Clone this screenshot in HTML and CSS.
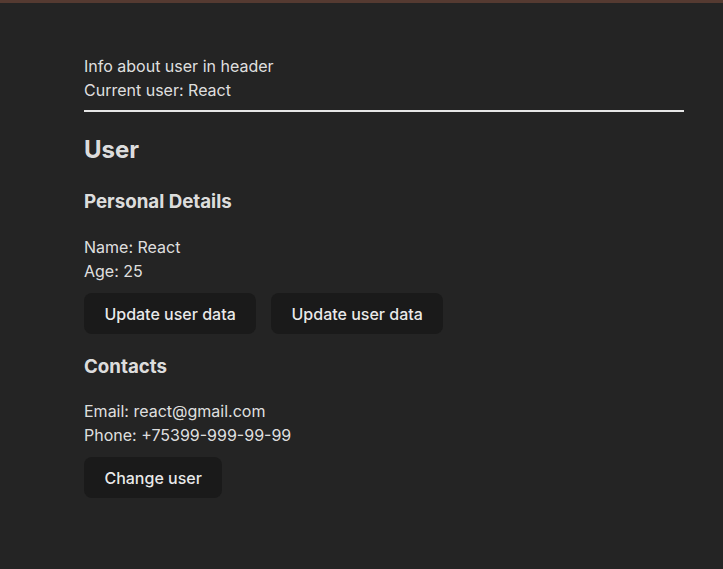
FILE: index.html
```html
<!DOCTYPE html>
<html lang="en">
<head>
<meta charset="utf-8">
<title>User</title>
<link rel="stylesheet" href="styles.css">
</head>
<body>
<div class="topbar"></div>
<main class="app">
  <header class="header">
    <p class="line">Info about user in header</p>
    <p class="line">Current user: React</p>
  </header>
  <h2 class="title">User</h2>
  <section class="section">
    <h3 class="subtitle">Personal Details</h3>
    <p class="line">Name: React</p>
    <p class="line">Age: 25</p>
    <div class="actions">
      <button class="btn">Update user data</button>
      <button class="btn">Update user data</button>
    </div>
  </section>
  <section class="section">
    <h3 class="subtitle">Contacts</h3>
    <p class="line">Email: react@gmail.com</p>
    <p class="line">Phone: +75399-999-99-99</p>
    <div class="actions">
      <button class="btn">Change user</button>
    </div>
  </section>
</main>
</body>
</html>
```
FILE: styles.css
```css
html, body {
  margin: 0;
  padding: 0;
}
body {
  background: #242424;
  color: rgba(255, 255, 255, 0.87);
  font-family: Inter, "Noto Sans", sans-serif;
  font-size: 16px;
  line-height: 24px;
  min-height: 569px;
}
.topbar {
  height: 3px;
  background: #553a31;
}
.app {
  width: 600px;
  margin-left: 84px;
  padding-top: 51px;
}
.header {
  padding-bottom: 8px;
  border-bottom: 2px solid #e6e6e6;
}
.line {
  margin: 0;
}
.title {
  margin: 23px 0 0;
  font-size: 24px;
  line-height: 29px;
  font-weight: 700;
}
.subtitle {
  margin: 26px 0 22px;
  font-size: 18.72px;
  line-height: 23px;
  font-weight: 700;
}
.section + .section .subtitle {
  margin: 21px 0 21px;
}
.actions {
  display: flex;
  gap: 15px;
  margin-top: 10px;
}
.btn {
  font-family: inherit;
  font-size: 16px;
  font-weight: 500;
  line-height: 20px;
  color: rgba(255, 255, 255, 0.92);
  background: #1a1a1a;
  border: 1px solid transparent;
  border-radius: 8px;
  padding: 9.6px 19.4px;
  cursor: pointer;
}
```
